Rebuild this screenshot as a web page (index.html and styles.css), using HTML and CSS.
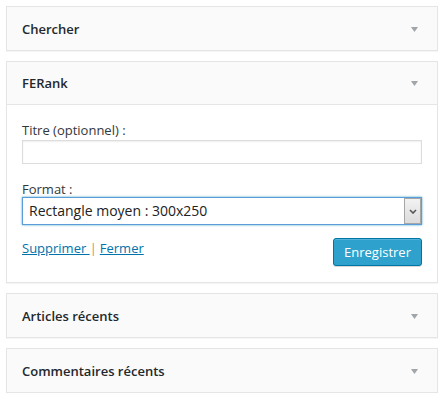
FILE: index.html
```html
<!DOCTYPE html>
<html lang="fr">
<head>
<meta charset="utf-8">
<title>Widgets</title>
<link rel="stylesheet" href="styles.css">
</head>
<body>
<div class="sidebar">
  <div class="widget">
    <div class="widget-top">
      <h3 class="widget-title">Chercher</h3>
      <svg class="toggle" width="7" height="5" viewBox="0 0 7 5"><polygon points="0,0 7,0 3.5,5" fill="#a0a5aa"/></svg>
    </div>
  </div>
  <div class="widget">
    <div class="widget-top open">
      <h3 class="widget-title">FERank</h3>
      <svg class="toggle" width="7" height="5" viewBox="0 0 7 5"><polygon points="0,0 7,0 3.5,5" fill="#a0a5aa"/></svg>
    </div>
    <div class="widget-inside">
      <label class="label label-title" for="titre">Titre (optionnel) :</label>
      <input class="text-input" id="titre" type="text">
      <label class="label label-format">Format :</label>
      <div class="select">
        <span class="select-value">Rectangle moyen : 300x250</span>
        <span class="select-arrow"><svg width="8" height="5" viewBox="0 0 8 5"><polyline points="1,1 4,4 7,1" fill="none" stroke="#555" stroke-width="1.6"/></svg></span>
      </div>
      <div class="controls">
        <div class="links"><a href="#" class="link">Supprimer&nbsp;</a><span class="sep">|</span><a href="#" class="link">Fermer</a></div>
        <button class="button-primary" type="button">Enregistrer</button>
      </div>
    </div>
  </div>
  <div class="widget">
    <div class="widget-top">
      <h3 class="widget-title">Articles récents</h3>
      <svg class="toggle" width="7" height="5" viewBox="0 0 7 5"><polygon points="0,0 7,0 3.5,5" fill="#a0a5aa"/></svg>
    </div>
  </div>
  <div class="widget">
    <div class="widget-top">
      <h3 class="widget-title">Commentaires récents</h3>
      <svg class="toggle" width="7" height="5" viewBox="0 0 7 5"><polygon points="0,0 7,0 3.5,5" fill="#a0a5aa"/></svg>
    </div>
  </div>
</div>
</body>
</html>
```
FILE: styles.css
```css
* { box-sizing: border-box; }
html, body { margin: 0; padding: 0; background: #fff; }
body {
  font-family: "Open Sans", "Noto Sans", sans-serif;
  font-size: 13px;
  color: #222;
}
.sidebar {
  width: 432px;
  margin: 6px 0 0 6px;
  display: flex;
  flex-direction: column;
  gap: 10px;
}
.widget {
  border: 1px solid #e5e5e5;
  background: #fff;
  box-shadow: 0 1px 1px rgba(0,0,0,.04);
}
.widget-top {
  height: 43px;
  background: #fafafa;
  display: flex;
  align-items: center;
  justify-content: space-between;
  padding: 0 19px 0 15px;
}
.widget-top.open {
  border-bottom: 1px solid #e5e5e5;
}
.widget-title {
  margin: 0;
  font-size: 13px;
  font-weight: 600;
  color: #23282d;
  line-height: 18px;
}
.toggle { display: block; margin-top: 1px; }
.widget-inside {
  padding: 16px 15px 16px;
  display: flex;
  flex-direction: column;
}
.label {
  display: block;
  color: #32373c;
  font-size: 13px;
}
.label-title { line-height: 19px; }
.label-format { line-height: 16px; margin-top: 17px; }
.text-input {
  display: block;
  width: 400px;
  height: 24px;
  margin: 0;
  border: 1px solid #ddd;
  box-shadow: inset 0 1px 2px rgba(0,0,0,.07);
  background: #fff;
  font-family: inherit;
  font-size: 14px;
  padding: 2px 6px;
}
.select {
  width: 400px;
  height: 28px;
  border: 1px solid #5b9dd9;
  box-shadow: 0 0 2px rgba(30,140,190,.8);
  background: #fff;
  display: flex;
  align-items: stretch;
  justify-content: space-between;
  padding: 0 0 0 6px;
}
.select-value {
  font-size: 14px;
  line-height: 26px;
  color: #222;
}
.select-arrow {
  width: 17px;
  border: 1px solid #a6a6a6;
  background: linear-gradient(#f2f2f2, #dcdcdc);
  display: flex;
  align-items: center;
  justify-content: center;
}
.select-arrow svg { display: block; }
.controls {
  margin-top: 13px;
  display: flex;
  justify-content: space-between;
  align-items: flex-start;
}
.links {
  line-height: 18px;
  font-size: 13px;
  padding-top: 1px;
  display: flex;
}
.link {
  color: #0073aa;
  text-decoration: underline;
}
.sep { color: #d98b4f; margin: 0 3px 0 0; }
.button-primary {
  height: 28px;
  width: 89px;
  padding: 0 10px 1px;
  margin: 0;
  font-family: inherit;
  font-size: 13px;
  line-height: 26px;
  color: #fff;
  background: #2ea2cc;
  border: 1px solid #0074a2;
  border-radius: 3px;
  box-shadow: inset 0 1px 0 rgba(120,200,230,.5), 0 1px 0 rgba(0,0,0,.15);
  cursor: pointer;
}
```
